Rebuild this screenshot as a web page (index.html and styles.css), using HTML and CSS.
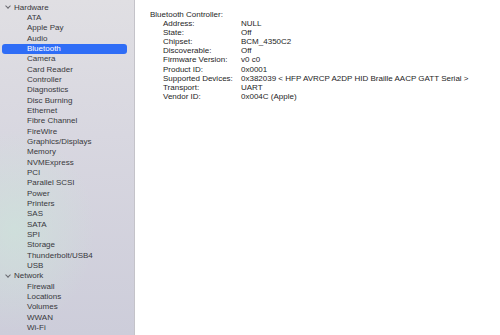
FILE: index.html
```html
<!DOCTYPE html>
<html lang="en">
<head>
    <meta charset="UTF-8">
    <title>System Information</title>
    <link rel="stylesheet" href="styles.css">
</head>
<body>
    <div class="window">
        <div class="sidebar">
            <div class="group">
                <div class="group-title"><span class="chevron"></span>Hardware</div>
                <div class="item">ATA</div>
                <div class="item">Apple Pay</div>
                <div class="item">Audio</div>
                <div class="item selected">Bluetooth</div>
                <div class="item">Camera</div>
                <div class="item">Card Reader</div>
                <div class="item">Controller</div>
                <div class="item">Diagnostics</div>
                <div class="item">Disc Burning</div>
                <div class="item">Ethernet</div>
                <div class="item">Fibre Channel</div>
                <div class="item">FireWire</div>
                <div class="item">Graphics/Displays</div>
                <div class="item">Memory</div>
                <div class="item">NVMExpress</div>
                <div class="item">PCI</div>
                <div class="item">Parallel SCSI</div>
                <div class="item">Power</div>
                <div class="item">Printers</div>
                <div class="item">SAS</div>
                <div class="item">SATA</div>
                <div class="item">SPI</div>
                <div class="item">Storage</div>
                <div class="item">Thunderbolt/USB4</div>
                <div class="item">USB</div>
            </div>
            <div class="group">
                <div class="group-title"><span class="chevron"></span>Network</div>
                <div class="item">Firewall</div>
                <div class="item">Locations</div>
                <div class="item">Volumes</div>
                <div class="item">WWAN</div>
                <div class="item">Wi-Fi</div>
            </div>
        </div>
        <div class="content">
            <div class="section-title">Bluetooth Controller:</div>
            <div class="props">
                <div class="key">Address:</div><div class="val">NULL</div>
                <div class="key">State:</div><div class="val">Off</div>
                <div class="key">Chipset:</div><div class="val">BCM_4350C2</div>
                <div class="key">Discoverable:</div><div class="val">Off</div>
                <div class="key">Firmware Version:</div><div class="val">v0 c0</div>
                <div class="key">Product ID:</div><div class="val">0x0001</div>
                <div class="key">Supported Devices:</div><div class="val">0x382039 &lt; HFP AVRCP A2DP HID Braille AACP GATT Serial &gt;</div>
                <div class="key">Transport:</div><div class="val">UART</div>
                <div class="key">Vendor ID:</div><div class="val">0x004C (Apple)</div>
            </div>
        </div>
    </div>
</body>
</html>
```

FILE: styles.css
```css
body {
    margin: 0;
    font-family: "Liberation Sans", Arial, sans-serif;
    font-size: 8px;
    background: #ffffff;
}
.window {
    display: flex;
    width: 500px;
    height: 335px;
    overflow: hidden;
}
.sidebar {
    width: 134px;
    flex-shrink: 0;
    border-right: 1px solid #c4c3c9;
    padding-top: 2.5px;
    background:
        radial-gradient(ellipse 80px 100px at 15px 230px, rgba(205, 228, 218, 0.7), rgba(205, 228, 218, 0) 100%),
        linear-gradient(180deg, #e0dfe3 0%, #d8d7e0 40%, #cdcdda 100%);
    color: #38383c;
}
.group-title {
    height: 10.35px;
    line-height: 10.35px;
    padding-left: 5px;
    display: flex;
    align-items: center;
}
.chevron {
    width: 3px;
    height: 3px;
    border-right: 1px solid #6a6a70;
    border-bottom: 1px solid #6a6a70;
    transform: rotate(45deg);
    margin: -3px 4px 0 1px;
}
.item {
    height: 10.35px;
    line-height: 10.35px;
    padding-left: 25px;
    margin: 0 7px 0 2px;
}
.item.selected {
    background: #2f6df6;
    color: #ffffff;
    border-radius: 3px;
}
.content {
    flex: 1;
    padding: 10px 0 0 15px;
    color: #1e1e1e;
}
.section-title {
    line-height: 9.1px;
}
.props {
    display: grid;
    grid-template-columns: 78px auto;
    padding-left: 13px;
    line-height: 9.1px;
}
```
